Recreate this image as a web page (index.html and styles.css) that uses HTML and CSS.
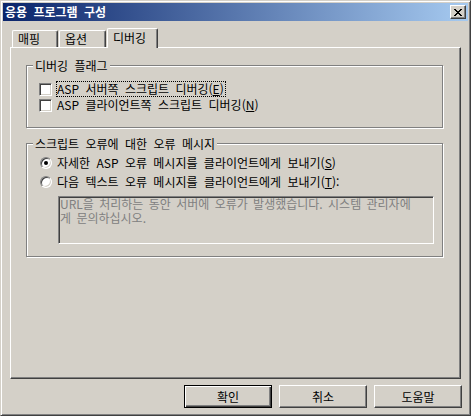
FILE: index.html
```html
<!DOCTYPE html>
<html lang="ko">
  <head>
    <meta charset="UTF-8" />
    <meta name="viewport" content="width=device-width, initial-scale=1.0" />
    <title>응용 프로그램 구성</title>
    <link rel="stylesheet" href="styles.css">
  </head>
  <body>
    <div class="window">
      <div class="titlebar">
        <span class="title">응용 프로그램 구성</span>
        <button class="close" aria-label="닫기">
          <svg width="8" height="7" viewBox="0 0 8 7" shape-rendering="crispEdges" aria-hidden="true">
            <path d="M0 0h2v1H0z M6 0h2v1H6z M1 1h2v1H1z M5 1h2v1H5z M2 2h4v1H2z M3 3h2v1H3z M2 4h4v1H2z M1 5h2v1H1z M5 5h2v1H5z M0 6h2v1H0z M6 6h2v1H6z" fill="#000" />
          </svg>
        </button>
      </div>

      <div class="client">
        <div class="tabs">
          <div class="tab tab-1">매핑</div>
          <div class="tab tab-2">옵션</div>
          <div class="tab tab-3 selected">디버깅</div>
        </div>

        <div class="panel">
          <div class="group group-flags">
            <div class="group-title">디버깅 플래그</div>
            <div class="row row-first">
              <span class="checkbox"></span>
              <span class="label focus">ASP 서버쪽 스크립트 디버깅(<u>E</u>)</span>
            </div>
            <div class="row">
              <span class="checkbox"></span>
              <span class="label">ASP 클라이언트쪽 스크립트 디버깅(<u>N</u>)</span>
            </div>
          </div>

          <div class="group group-errors">
            <div class="group-title">스크립트 오류에 대한 오류 메시지</div>
            <div class="row row-radio-first">
              <span class="radio checked"></span>
              <span class="label">자세한 ASP 오류 메시지를 클라이언트에게 보내기(<u>S</u>)</span>
            </div>
            <div class="row row-radio">
              <span class="radio"></span>
              <span class="label">다음 텍스트 오류 메시지를 클라이언트에게 보내기(<u>T</u>):</span>
            </div>
            <div class="message">URL을 처리하는 동안 서버에 오류가 발생했습니다. 시스템 관리자에<br>게 문의하십시오.</div>
          </div>
        </div>

        <div class="actions">
          <button class="btn default">확인</button>
          <button class="btn">취소</button>
          <button class="btn">도움말</button>
        </div>
      </div>
    </div>
  </body>
</html>
```

FILE: styles.css
```css
* {
  box-sizing: border-box;
}

body {
  margin: 0;
  background: #d4d0c8;
  font-family: "Noto Sans CJK KR", "DejaVu Sans", sans-serif;
  font-size: 12px;
  color: #000;
}

.window {
  width: 471px;
  height: 416px;
  display: flex;
  flex-direction: column;
  padding: 2px;
  border: 1px solid;
  border-color: #d4d0c8 #404040 #404040 #d4d0c8;
  box-shadow: inset 1px 1px #fff, inset -1px -1px #808080;
  background: #d4d0c8;
}

/* title bar */
.titlebar {
  height: 18px;
  display: flex;
  align-items: center;
  justify-content: space-between;
  padding: 0 2px;
  background: linear-gradient(to right, #0a246a, #a6caf0);
}

.title {
  color: #fff;
  font-weight: bold;
  line-height: 14px;
  word-spacing: 3px;
}

.close {
  width: 16px;
  height: 14px;
  padding: 0;
  display: flex;
  align-items: center;
  justify-content: center;
  background: #d4d0c8;
  border: 1px solid;
  border-color: #fff #404040 #404040 #fff;
  box-shadow: inset -1px -1px #808080;
}

/* client area */
.client {
  flex: 1;
  display: flex;
  flex-direction: column;
  padding: 7px 7px 5px 7px;
}

.tabs {
  display: flex;
  align-items: flex-end;
  height: 19px;
  padding-left: 2px;
}

.tab {
  height: 17px;
  padding-left: 5px;
  line-height: 15px;
  border: 1px solid;
  border-bottom: 0;
  border-color: #fff #404040 #fff #fff;
  border-radius: 2px 2px 0 0;
  box-shadow: inset -1px 0 #808080;
  background: #d4d0c8;
}

.tab-1 {
  width: 46px;
}

.tab-2 {
  width: 47px;
  margin-left: 1px;
}

.tab-3 {
  width: 51px;
  margin-left: 1px;
}

.tab.selected {
  position: relative;
  z-index: 1;
  height: 20px;
  padding-top: 1px;
  margin-bottom: -1px;
}

.panel {
  flex: 1;
  padding: 17px 17px 0 15px;
  border: 1px solid;
  border-color: #fff #404040 #404040 #fff;
  box-shadow: inset -1px -1px #808080;
}

/* group boxes */
.group {
  border: 1px solid #808080;
  box-shadow: 1px 1px #fff, inset 1px 1px #fff;
  padding: 0 0 0 12px;
}

.group-title {
  width: fit-content;
  margin: -7px 0 0 -6px;
  padding: 0 2px;
  line-height: 13px;
  background: #d4d0c8;
  word-spacing: 3px;
}

.group-flags {
  padding-bottom: 14px;
}

.group-errors {
  margin-top: 15px;
  padding-bottom: 12px;
}

.row {
  display: flex;
  align-items: center;
  height: 16px;
}

.row-first {
  margin-top: 9px;
}

.row-radio-first {
  margin-top: 5px;
}

.row-radio {
  margin-top: 3px;
}

.label {
  margin-left: 4px;
  padding-right: 1px;
  border: 1px solid transparent;
  line-height: 14px;
  white-space: nowrap;
  word-spacing: 3px;
}

.label.focus {
  border: 1px dotted #000;
}

.checkbox {
  width: 13px;
  height: 13px;
  border: 1px solid;
  border-color: #808080 #fff #fff #808080;
  box-shadow: inset 1px 1px #404040, inset -1px -1px #d4d0c8;
  background: #fff;
}

.radio {
  width: 12px;
  height: 12px;
  margin-left: 1px;
  display: flex;
  align-items: center;
  justify-content: center;
  border-radius: 50%;
  border: 1px solid;
  border-color: #808080 #fff #fff #808080;
  box-shadow: inset 1px 1px #404040, inset -1px -1px #d4d0c8;
  background: #fff;
}

.radio.checked::after {
  content: "";
  width: 4px;
  height: 4px;
  border-radius: 50%;
  background: #000;
}

.message {
  width: 376px;
  height: 48px;
  margin: 6px 0 0 19px;
  padding: 0 0 0 1px;
  border: 1px solid;
  border-color: #808080 #fff #fff #808080;
  box-shadow: inset 1px 1px #404040, inset -1px -1px #d4d0c8;
  color: #808080;
  line-height: 14px;
  white-space: nowrap;
  overflow: hidden;
  word-spacing: 2px;
}

/* buttons */
.actions {
  display: flex;
  justify-content: flex-end;
  gap: 7px;
  margin: 6px -1px 0 0;
}

.btn {
  width: 88px;
  height: 23px;
  padding: 0;
  font-family: inherit;
  font-size: 12px;
  color: #000;
  background: #d4d0c8;
  border: 1px solid;
  border-color: #fff #404040 #404040 #fff;
  box-shadow: inset -1px -1px #808080;
}

.btn.default {
  border-color: #000;
  box-shadow: inset 1px 1px #fff, inset -1px -1px #404040, inset -2px -2px #808080;
}
```
